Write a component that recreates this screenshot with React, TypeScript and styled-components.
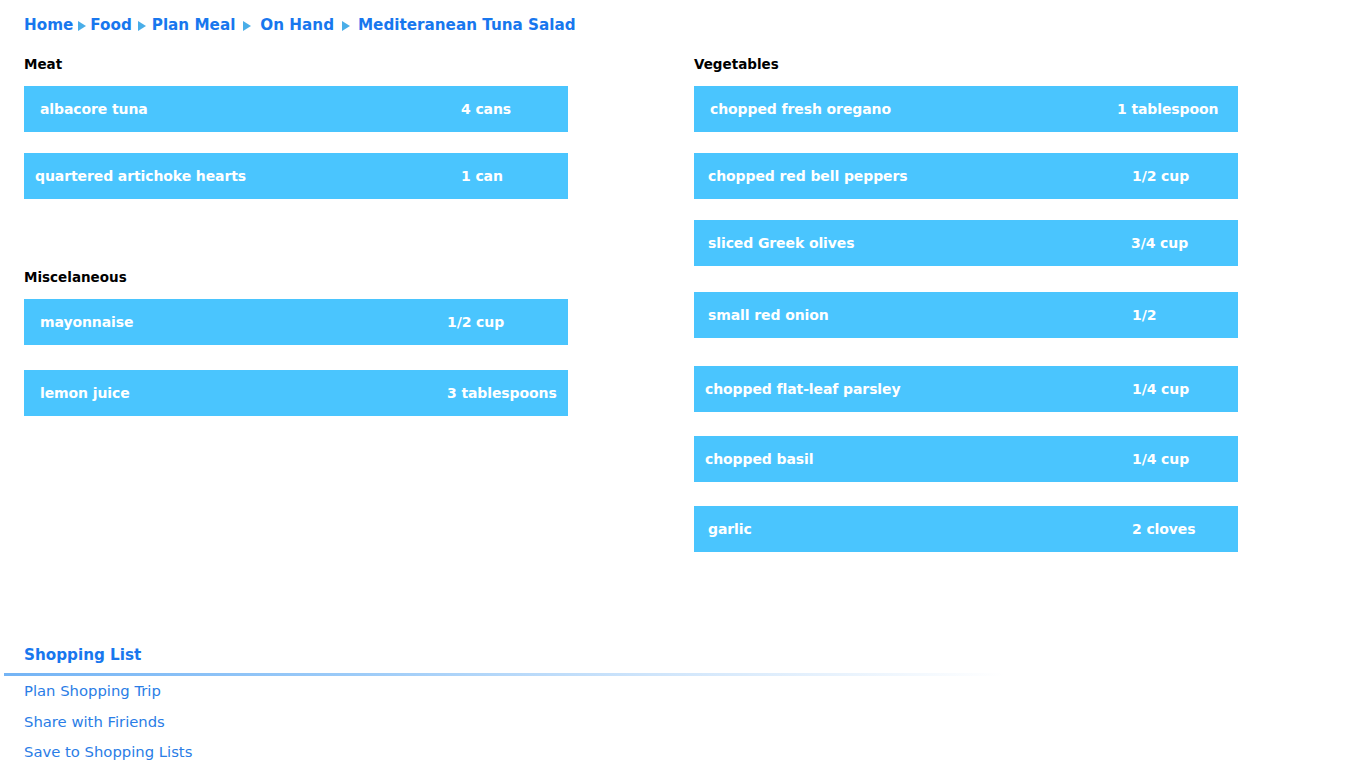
import React from "react";
import styled, { createGlobalStyle } from "styled-components";

const GlobalStyle = createGlobalStyle`
  html, body { margin: 0; padding: 0; background: #ffffff; }
  body { font-family: "DejaVu Sans", Verdana, sans-serif; }
`;

const Page = styled.div`
  padding: 10px 0 0 24px;
  width: 1346px;
  box-sizing: border-box;
`;

const Breadcrumb = styled.nav`
  display: flex;
  align-items: center;
  height: 30px;
  font-size: 15.2px;
  font-weight: bold;
  color: #1877ee;
`;

const Crumb = styled.a`
  color: inherit;
  text-decoration: none;
`;

const Arrow = styled.span<{ $before: number; $after: number }>`
  display: inline-block;
  width: 0;
  height: 0;
  margin: 1px ${(p) => p.$after}px 0 ${(p) => p.$before}px;
  border-left: 8px solid #4aaee8;
  border-top: 5px solid transparent;
  border-bottom: 5px solid transparent;
`;

const Columns = styled.div`
  display: grid;
  grid-template-columns: 544px 544px;
  column-gap: 126px;
  align-items: start;
`;

const Column = styled.div`
  display: flex;
  flex-direction: column;
`;

const SectionTitle = styled.h3<{ $top: number }>`
  margin: ${(p) => p.$top}px 0 12px;
  font-size: 13.5px;
  line-height: 20px;
  font-weight: bold;
  color: #000;
`;

const Item = styled.div<{ $top: number }>`
  display: flex;
  align-items: center;
  height: 46px;
  margin-top: ${(p) => p.$top}px;
  background: #4ac5fe;
  color: #ffffff;
  font-size: 14px;
  font-weight: bold;
  letter-spacing: -0.1px;
  white-space: nowrap;
  padding-bottom: 1px;
  box-sizing: border-box;
`;

const Name = styled.span<{ $indent: number; $width: number }>`
  padding-left: ${(p) => p.$indent}px;
  width: ${(p) => p.$width}px;
  box-sizing: border-box;
  flex-shrink: 0;
`;

const Amount = styled.span``;

const Footer = styled.div`
  margin-top: 93px;
`;

const FooterTitle = styled.h2`
  margin: 0 0 8px;
  font-size: 15.2px;
  line-height: 20px;
  font-weight: bold;
  color: #1877ee;
`;

const Rule = styled.div`
  margin-left: -20px;
  width: 1000px;
  height: 3px;
  background: linear-gradient(to right, #74b4f5 0%, #9ccbf8 35%, #cfe5fb 65%, rgba(255, 255, 255, 0) 100%);
`;

const LinkList = styled.ul`
  list-style: none;
  margin: 0;
  padding: 0;
`;

const LinkItem = styled.li`
  line-height: 30.5px;
  font-size: 14.8px;
  a {
    color: #2a7de6;
    text-decoration: none;
  }
`;

type Ing = { name: string; amount: string; top: number; indent: number; at: number };

const meat: Ing[] = [
  { name: "albacore tuna", amount: "4 cans", top: 0, indent: 16, at: 437 },
  { name: "quartered artichoke hearts", amount: "1 can", top: 21, indent: 11, at: 437 },
];

const misc: Ing[] = [
  { name: "mayonnaise", amount: "1/2 cup", top: 0, indent: 16, at: 423 },
  { name: "lemon juice", amount: "3 tablespoons", top: 25, indent: 16, at: 423 },
];

const veg: Ing[] = [
  { name: "chopped fresh oregano", amount: "1 tablespoon", top: 0, indent: 16, at: 423 },
  { name: "chopped red bell peppers", amount: "1/2 cup", top: 21, indent: 14, at: 438 },
  { name: "sliced Greek olives", amount: "3/4 cup", top: 21, indent: 14, at: 437 },
  { name: "small red onion", amount: "1/2", top: 26, indent: 14, at: 438 },
  { name: "chopped flat-leaf parsley", amount: "1/4 cup", top: 28, indent: 11, at: 438 },
  { name: "chopped basil", amount: "1/4 cup", top: 24, indent: 11, at: 438 },
  { name: "garlic", amount: "2 cloves", top: 24, indent: 14, at: 438 },
];

const crumbs = [
  { label: "Home", before: 0, after: 0 },
  { label: "Food", before: 5, after: 4 },
  { label: "Plan Meal", before: 6, after: 6 },
  { label: "On Hand", before: 8, after: 9 },
  { label: "Mediteranean Tuna Salad", before: 8, after: 8 },
];

function Ingredients({ items }: { items: Ing[] }) {
  return (
    <>
      {items.map((it) => (
        <Item key={it.name} $top={it.top}>
          <Name $indent={it.indent} $width={it.at}>
            {it.name}
          </Name>
          <Amount>{it.amount}</Amount>
        </Item>
      ))}
    </>
  );
}

export default function App() {
  return (
    <>
      <GlobalStyle />
      <Page>
        <Breadcrumb>
          {crumbs.map((c, i) => (
            <React.Fragment key={c.label}>
              {i > 0 && <Arrow $before={c.before} $after={c.after} />}
              <Crumb href="#">{c.label}</Crumb>
            </React.Fragment>
          ))}
        </Breadcrumb>
        <Columns>
          <Column>
            <SectionTitle $top={14}>Meat</SectionTitle>
            <Ingredients items={meat} />
            <SectionTitle $top={68}>Miscelaneous</SectionTitle>
            <Ingredients items={misc} />
          </Column>
          <Column>
            <SectionTitle $top={14}>Vegetables</SectionTitle>
            <Ingredients items={veg} />
          </Column>
        </Columns>
        <Footer>
          <FooterTitle>Shopping List</FooterTitle>
          <Rule />
          <LinkList>
            <LinkItem>
              <a href="#">Plan Shopping Trip</a>
            </LinkItem>
            <LinkItem>
              <a href="#">Share with Firiends</a>
            </LinkItem>
            <LinkItem>
              <a href="#">Save to Shopping Lists</a>
            </LinkItem>
          </LinkList>
        </Footer>
      </Page>
    </>
  );
}
